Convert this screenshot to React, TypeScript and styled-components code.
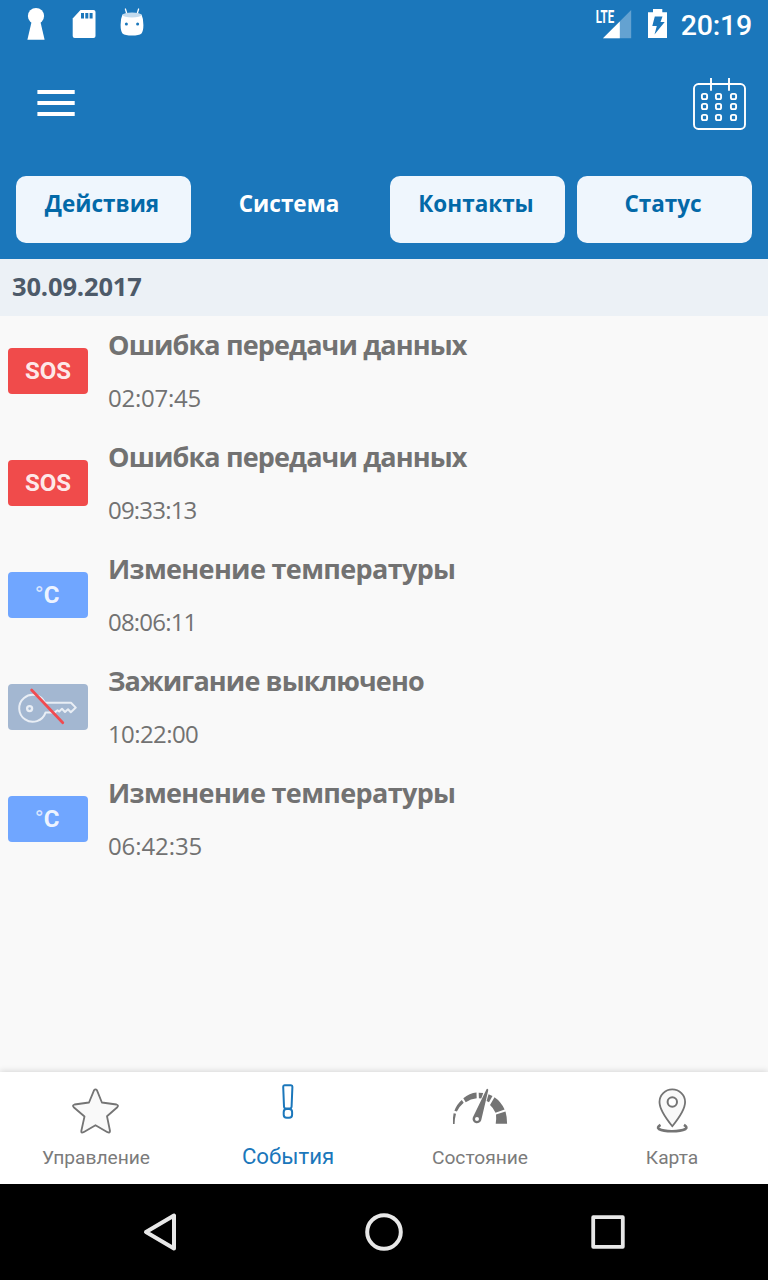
import React from "react";
import styled, { createGlobalStyle } from "styled-components";

const GlobalStyle = createGlobalStyle`
  body { margin: 0; background: #f9f9f9; }
  *, *::before, *::after { box-sizing: border-box; }
`;

const Screen = styled.div`
  display: flex;
  flex-direction: column;
  width: 768px;
  height: 1280px;
  overflow: hidden;
  background: #f9f9f9;
  font-family: "Open Sans", "Noto Sans", sans-serif;
`;

const Icon = styled.svg`
  display: block;
  flex: none;
`;

const Header = styled.header`
  display: flex;
  flex-direction: column;
  height: 259px;
  flex: none;
  background: #1b77bb;
`;

const StatusBar = styled.div`
  display: flex;
  justify-content: space-between;
  height: 48px;
  padding: 0 16px 0 12px;
`;

const StatusGroup = styled.div`
  display: flex;
  align-items: center;
`;

const Clock = styled.span`
  margin-left: 9px;
  padding-top: 3px;
  color: #fff;
  font: 500 28.5px/48px Roboto, sans-serif;
  letter-spacing: -0.2px;
`;

const Toolbar = styled.div`
  display: flex;
  justify-content: space-between;
  align-items: center;
  height: 112px;
  padding: 0 20px 0 36px;
`;

const IconButton = styled.button`
  padding: 0;
  border: 0;
  background: none;
`;

const Tabs = styled.nav`
  display: grid;
  grid-template-columns: repeat(4, 175px);
  gap: 12px;
  padding: 16px 16px 0;
`;

const Tab = styled.button<{ $active?: boolean }>`
  display: flex;
  justify-content: center;
  align-items: flex-start;
  height: 67px;
  padding: 13px 3px 0 0;
  border: 0;
  border-radius: 10px;
  background: ${(p) => (p.$active ? "transparent" : "#eff6fd")};
  color: ${(p) => (p.$active ? "#fff" : "#0369a8")};
  font: 700 22.5px/30px "Open Sans", sans-serif;
  white-space: nowrap;
`;

const DateBar = styled.div`
  flex: none;
  height: 57px;
  padding: 0 12px;
  background: #ecf1f6;
  color: #4d5a69;
  font-size: 25.5px;
  font-weight: 700;
  line-height: 55px;
  letter-spacing: -0.15px;
`;

const EventList = styled.ul`
  flex: 1;
  margin: 0;
  padding: 0;
  list-style: none;
`;

const EventRow = styled.li`
  display: flex;
  gap: 20px;
  height: 112px;
  padding: 0 8px;
`;

const Badge = styled.div<{ $color: string }>`
  display: flex;
  justify-content: center;
  align-items: center;
  flex: none;
  width: 80px;
  height: 46px;
  margin-top: 32px;
  border-radius: 4px;
  background: ${(p) => p.$color};
  color: rgba(255, 255, 255, 0.9);
  font: 700 24px/46px Roboto, sans-serif;
`;

const Degree = styled.span`
  margin-left: -2px;
  font-weight: 400;
  opacity: 0.8;
`;

const EventText = styled.div`
  padding-top: 10px;
  color: #727272;
  white-space: nowrap;
`;

const EventTitle = styled.div<{ $spacing: number }>`
  font-size: 27px;
  font-weight: 700;
  line-height: 38px;
  letter-spacing: ${(p) => p.$spacing}px;
`;

const EventTime = styled.div<{ $spacing: number }>`
  margin-top: 18px;
  font-size: 24px;
  line-height: 32px;
  letter-spacing: ${(p) => p.$spacing}px;
`;

const BottomNav = styled.nav`
  display: grid;
  grid-template-columns: repeat(4, 1fr);
  flex: none;
  height: 112px;
  background: #fff;
  box-shadow: 0 -1px 6px rgba(0, 0, 0, 0.14);
`;

const NavItem = styled.button<{ $active?: boolean }>`
  display: flex;
  flex-direction: column;
  align-items: center;
  padding: ${(p) => (p.$active ? "8px 0 0" : "12px 0 0")};
  border: 0;
  background: none;
  color: ${(p) => (p.$active ? "#1b77bb" : "#7b7b7b")};
  font: 400 ${(p) => (p.$active ? "22.2px" : "19.2px")}/26px Roboto, sans-serif;
`;

const NavLabel = styled.span<{ $active?: boolean }>`
  margin-top: ${(p) => (p.$active ? "13px" : "11px")};
`;

const SystemNav = styled.div`
  display: flex;
  justify-content: space-around;
  align-items: center;
  flex: none;
  height: 96px;
  padding: 0 48px;
  background: #000;
`;

const KeyholeIcon = () => (
  <Icon width="48" height="48" viewBox="12 0 48 48" fill="#fff">
    <circle cx="36" cy="16" r="8.1" />
    <path d="M32 20h8l4.6 19.8H27.4z" />
  </Icon>
);

const SdCardIcon = () => (
  <Icon width="48" height="48" viewBox="60 0 48 48">
    <path d="M80.5 10H93.5q2 0 2 2V36q0 2-2 2H74.7q-2 0-2-2V18.5z" fill="#fff" />
    <path d="M81 13h3v5.5h-3zM85.3 13h3v5.5h-3zM89.6 13h3v5.5h-3z" fill="#1b77bb" />
  </Icon>
);

const DroidIcon = () => (
  <Icon width="48" height="48" viewBox="108 0 48 48">
    <path d="M125.4 9l1.5 5M138.6 9l-1.5 5" stroke="#fff" strokeWidth="1.3" strokeLinecap="round" />
    <path d="M122.5 14.5Q132 12 141.5 14.5Q143.6 19 143.4 25Q143.4 31 141.5 33.5Q139 35.5 132 35.5Q125 35.5 122.5 33.5Q120.6 31 120.6 25Q120.4 19 122.5 14.5z" fill="#fff" />
    <ellipse cx="132" cy="15" rx="9.3" ry="2.4" fill="#c3dbee" />
    <circle cx="126.4" cy="24" r="1.5" fill="#1b77bb" />
    <circle cx="137.6" cy="24" r="1.5" fill="#1b77bb" />
  </Icon>
);

const SignalIcon = () => (
  <Icon width="44" height="48" viewBox="592 0 44 48">
    <path d="M631.2 10V38.3H603z" fill="#fff" opacity="0.32" />
    <path d="M619.8 21.5V38.3H603z" fill="#fff" />
    <text x="595.7" y="22.7" textLength="18.5" lengthAdjust="spacingAndGlyphs" fill="#fff" fontFamily="Roboto, sans-serif" fontWeight="700" fontSize="17.5">LTE</text>
  </Icon>
);

const BatteryIcon = () => (
  <Icon width="36" height="48" viewBox="636 0 36 48">
    <path d="M653 9h9.3v3.2H667V38H648V12.2h5z" fill="#fff" />
    <path d="M654.8 16.5h7.7l-2 5.500h4.200l-10.200 12.500 2.300-8.500h-4.500z" fill="#1b77bb" />
  </Icon>
);

const MenuIcon = () => (
  <Icon width="40" height="40" viewBox="36 84 40 40">
    <path d="M37.4 92h37.3M37.4 103h37.3M37.4 114h37.3" stroke="#fff" strokeWidth="4" />
  </Icon>
);

const CalendarIcon = () => (
  <Icon width="56" height="56" viewBox="692 76 56 56" fill="none" stroke="#fff" strokeWidth="1.9">
    <rect x="694" y="84" width="51" height="45" rx="4.5" />
    <path d="M711 78v12.7M729 78v12.7" />
    {[96.5, 106.5, 117.5].map((y) =>
      [704.5, 718.5, 733.5].map((x) => (
        <rect key={`${x}-${y}`} x={x - 2.6} y={y - 2.6} width="5.2" height="5.2" rx="1.6" />
      )),
    )}
  </Icon>
);

const KeyOffIcon = () => (
  <Icon width="80" height="46" viewBox="8 684 80 46" fill="none" strokeLinejoin="round">
    <g stroke="#e9eef5" strokeWidth="2">
      <path d="M45 702.7H71L75.8 707.6L70.8 712.3L68 709.3L65 712L62 708.8L59.2 711.5L57.500 710.200L54.500 712.600H45.500A13.500 13.500 0 1 1 45 702.700z" />
      <circle cx="29.6" cy="708.6" r="2.5" strokeWidth="2.3" />
    </g>
    <path d="M31.6 690L62.8 722.7" stroke="#f04b50" strokeWidth="2.7" strokeLinecap="round" />
  </Icon>
);

const StarIcon = () => (
  <Icon width="56" height="50" viewBox="68 1084 56 50">
    <path d="M94 1090.3Q95.5 1088.3 97 1090.3L101.9 1102.5L116.5 1104.5Q119 1105.2 117.3 1107.2L107 1116.2L110 1131Q110 1133.2 107.5 1132.2L95.5 1125.2L83.5 1132.2Q81 1133.2 81.3 1131L84.5 1116.5L73.7 1107.2Q72 1105.2 74.5 1104.5L89 1102.5z" fill="#f9f9f9" stroke="#747474" strokeWidth="1.8" strokeLinejoin="round" />
  </Icon>
);

const ExclamationIcon = () => (
  <Icon width="32" height="50" viewBox="272 1080 32 50" fill="none" stroke="#1b77bb" strokeWidth="2">
    <path d="M284.5 1085.2H291Q292.4 1085.2 292.4 1086.7L291.600 1106.500Q291.400 1108.500 289.900 1108.500H285.700Q284.200 1108.500 284 1106.500L283.200 1086.700Q283.200 1085.200 284.500 1085.200z" />
    <rect x="283.7" y="1109" width="8.4" height="8.8" rx="3" />
  </Icon>
);

const GaugeIcon = () => (
  <Icon width="60" height="50" viewBox="450 1084 60 50" fill="#747474">
    <path d="M453.600 1113.200L456 1113.800Q454.700 1118.500 454.600 1124H453Q452.600 1118 453.600 1113.200z" />
    <path d="M461.800 1100L463.700 1102.800Q459.300 1106.500 456.900 1111.500L454.400 1110.800Q456.800 1104.200 461.800 1100z" />
    <path d="M463.3 1098.3Q469.5 1093.3 476.5 1092.6L476.7 1098.2Q470.7 1098.7 465.7 1102.2z" />
    <path d="M478.7 1092.7L483.2 1093L481.3 1098.5L478.9 1098.3z" />
    <path d="M488.5 1094.2L492.5 1096L489 1102.3L486.6 1101z" />
    <path d="M494.5 1097.2Q501 1101.5 504.6 1109.5L495.5 1112.8Q493.5 1108 490 1105z" />
    <path d="M496 1114.5L505.5 1111.5Q507.1 1117 507.1 1123.7H495.7Q496.5 1118.5 496 1114.5z" />
    <path fillRule="evenodd" d="M487.3 1088.8Q488.5 1089 488.2 1090.5L481.2 1120.3A4.4 4.4 0 1 1 472.8 1117.4L486.3 1089.8Q486.7 1088.7 487.3 1088.8zM477 1117.1A2 2 0 1 0 477 1121.1A2 2 0 1 0 477 1117.1z" />
  </Icon>
);

const MapPinIcon = () => (
  <Icon width="40" height="50" viewBox="652 1084 40 50" fill="none" stroke="#747474">
    <path d="M672.3 1126.2Q659.5 1110.5 659.5 1102A12.8 12.6 0 0 1 685.1 1102Q685.1 1110.5 672.3 1126.2z" fill="#f9f9f9" strokeWidth="1.8" />
    <circle cx="672.3" cy="1102" r="4.7" fill="#fff" strokeWidth="2" />
    <path d="M660.5 1124.8Q656.5 1127.3 658.9 1129Q663 1131.2 672 1131.2Q681 1131.2 685.5 1129Q688 1127.3 684 1124.8" strokeWidth="2.6" />
  </Icon>
);

const BackIcon = () => (
  <Icon width="40" height="48" viewBox="140 1208 40 48" fill="none" stroke="#e8e8e8" strokeWidth="4" strokeLinejoin="round">
    <path d="M174 1215.5V1248.5L146 1232z" />
  </Icon>
);

const HomeIcon = () => (
  <Icon width="40" height="48" viewBox="364 1208 40 48" fill="none" stroke="#e8e8e8" strokeWidth="4">
    <circle cx="384" cy="1232" r="16.8" />
  </Icon>
);

const RecentsIcon = () => (
  <Icon width="40" height="48" viewBox="588 1208 40 48" fill="none" stroke="#e8e8e8" strokeWidth="3.8" strokeLinejoin="round">
    <rect x="593.2" y="1217.2" width="29.6" height="29.6" />
  </Icon>
);

type EventKind = "sos" | "temperature" | "ignitionOff";

const badgeColors: Record<EventKind, string> = {
  sos: "#f04b4b",
  temperature: "#70a6ff",
  ignitionOff: "#a3b7d1",
};

const tabs = [
  { label: "Действия" },
  { label: "Система", active: true },
  { label: "Контакты" },
  { label: "Статус" },
];

const events: { kind: EventKind; title: string; time: string; spacing: number; timeSpacing: number }[] = [
  { kind: "sos", title: "Ошибка передачи данных", time: "02:07:45", spacing: -0.86, timeSpacing: -0.25 },
  { kind: "sos", title: "Ошибка передачи данных", time: "09:33:13", spacing: -0.86, timeSpacing: -0.8 },
  { kind: "temperature", title: "Изменение температуры", time: "08:06:11", spacing: -0.65, timeSpacing: -0.8 },
  { kind: "ignitionOff", title: "Зажигание выключено", time: "10:22:00", spacing: -0.87, timeSpacing: -0.6 },
  { kind: "temperature", title: "Изменение температуры", time: "06:42:35", spacing: -0.65, timeSpacing: -0.1 },
];

const navItems = [
  { label: "Управление", icon: <StarIcon /> },
  { label: "События", icon: <ExclamationIcon />, active: true },
  { label: "Состояние", icon: <GaugeIcon /> },
  { label: "Карта", icon: <MapPinIcon /> },
];

const EventBadge = ({ kind }: { kind: EventKind }) => (
  <Badge $color={badgeColors[kind]}>
    {kind === "sos" && "SOS"}
    {kind === "temperature" && (
      <>
        <Degree>°</Degree>C
      </>
    )}
    {kind === "ignitionOff" && <KeyOffIcon />}
  </Badge>
);

export default function App() {
  return (
    <Screen>
      <GlobalStyle />
      <Header>
        <StatusBar>
          <StatusGroup>
            <KeyholeIcon />
            <SdCardIcon />
            <DroidIcon />
          </StatusGroup>
          <StatusGroup>
            <SignalIcon />
            <BatteryIcon />
            <Clock>20:19</Clock>
          </StatusGroup>
        </StatusBar>
        <Toolbar>
          <IconButton aria-label="Меню">
            <MenuIcon />
          </IconButton>
          <IconButton aria-label="Календарь">
            <CalendarIcon />
          </IconButton>
        </Toolbar>
        <Tabs>
          {tabs.map((tab) => (
            <Tab key={tab.label} $active={tab.active}>
              {tab.label}
            </Tab>
          ))}
        </Tabs>
      </Header>
      <DateBar>30.09.2017</DateBar>
      <EventList>
        {events.map((event) => (
          <EventRow key={event.time}>
            <EventBadge kind={event.kind} />
            <EventText>
              <EventTitle $spacing={event.spacing}>{event.title}</EventTitle>
              <EventTime $spacing={event.timeSpacing}>{event.time}</EventTime>
            </EventText>
          </EventRow>
        ))}
      </EventList>
      <BottomNav>
        {navItems.map((item) => (
          <NavItem key={item.label} $active={item.active}>
            {item.icon}
            <NavLabel $active={item.active}>{item.label}</NavLabel>
          </NavItem>
        ))}
      </BottomNav>
      <SystemNav>
        <BackIcon />
        <HomeIcon />
        <RecentsIcon />
      </SystemNav>
    </Screen>
  );
}
